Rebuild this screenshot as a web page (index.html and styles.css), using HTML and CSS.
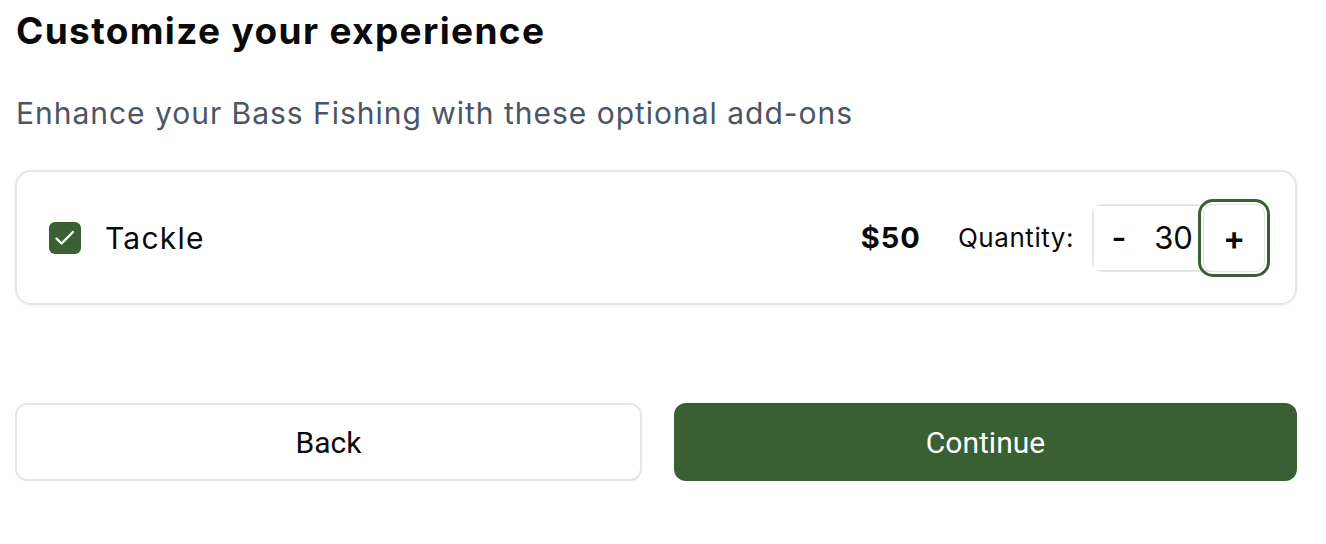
FILE: index.html
```html
<!DOCTYPE html>
<html lang="en">
<head>
<meta charset="utf-8">
<title>Customize your experience</title>
<link rel="stylesheet" href="styles.css">
</head>
<body>
<main class="page">
  <h1 class="title">Customize your experience</h1>
  <p class="subtitle">Enhance your Bass Fishing with these optional add-ons</p>

  <div class="addon-card">
    <label class="addon-left">
      <span class="checkbox">
        <svg viewBox="0 0 32 32" width="32" height="32" aria-hidden="true">
          <path d="M7.5 16.5 L12.5 21.5 L24 10" fill="none" stroke="#ffffff" stroke-width="2.4" stroke-linecap="round" stroke-linejoin="round"/>
        </svg>
      </span>
      <span class="addon-name">Tackle</span>
    </label>
    <div class="addon-right">
      <span class="price">$50</span>
      <span class="qty-label">Quantity:</span>
      <div class="stepper">
        <button class="step-btn minus" type="button">-</button>
        <span class="qty-value">30</span>
        <button class="step-btn plus" type="button">+</button>
      </div>
    </div>
  </div>

  <div class="actions">
    <button class="btn btn-back" type="button">Back</button>
    <button class="btn btn-continue" type="button">Continue</button>
  </div>
</main>
</body>
</html>
```

FILE: styles.css
```css
* { box-sizing: border-box; }

html, body {
  margin: 0;
  padding: 0;
  background: #ffffff;
}

body {
  font-family: Inter, "Noto Sans", sans-serif;
  color: #0a0a0a;
}

.page {
  width: 1297px;
  padding: 9px 0 0 15px;
}

.title {
  margin: 0 0 0 1px;
  font-size: 37px;
  line-height: 44px;
  font-weight: 700;
  letter-spacing: 1.35px;
  color: #0a0a0a;
}

.subtitle {
  margin: 42px 0 0 1px;
  font-size: 30px;
  line-height: 36px;
  font-weight: 400;
  letter-spacing: 0.98px;
  color: #4b5563;
}

.addon-card {
  margin-top: 39px;
  height: 135px;
  border: 2px solid #e6e6e6;
  border-radius: 16px;
  box-shadow: 0 1px 3px rgba(0, 0, 0, 0.06);
  display: flex;
  align-items: center;
  justify-content: space-between;
  padding: 0 30px 0 32px;
}

.addon-left {
  display: flex;
  align-items: center;
  gap: 24px;
}

.checkbox {
  width: 32px;
  height: 32px;
  border-radius: 6px;
  background: #3a5f33;
  display: flex;
}

.addon-name {
  font-size: 30px;
  line-height: 36px;
  letter-spacing: 1.2px;
  color: #0a0a0a;
}

.addon-right {
  display: flex;
  align-items: center;
}

.price {
  font-size: 29px;
  font-weight: 700;
  letter-spacing: 1px;
  margin-right: 37px;
}

.qty-label {
  font-size: 26px;
  letter-spacing: 0.55px;
  margin-right: 18px;
}

.stepper {
  display: flex;
  align-items: stretch;
  height: 68px;
  border: 2px solid #e6e6e6;
  border-right: none;
  border-radius: 10px;
}

.step-btn {
  font-family: Inter, "Noto Sans", sans-serif;
  background: #ffffff;
  border: none;
  padding: 0;
  color: #0a0a0a;
  cursor: pointer;
}

.minus {
  width: 50px;
  font-size: 32px;
  font-weight: 600;
}

.qty-value {
  width: 59px;
  display: flex;
  align-items: center;
  justify-content: center;
  font-size: 31px;
}

.plus {
  width: 62px;
  margin: -2px 0 -2px 0;
  border: 1px solid #e3e3e3;
  border-radius: 10px;
  font-size: 33px;
  font-weight: 600;
  outline: 3px solid #3a5f33;
  outline-offset: 2px;
}

.actions {
  margin-top: 98px;
  display: flex;
  gap: 32px;
}

.btn {
  flex: 1;
  height: 78px;
  border-radius: 12px;
  font-family: Roboto, "Liberation Sans", sans-serif;
  font-size: 30px;
  cursor: pointer;
}

.btn-back {
  background: #ffffff;
  border: 2px solid #e6e6e6;
  color: #0a0a0a;
}

.btn-continue {
  background: #3a5f33;
  border: none;
  color: #ffffff;
}
```
